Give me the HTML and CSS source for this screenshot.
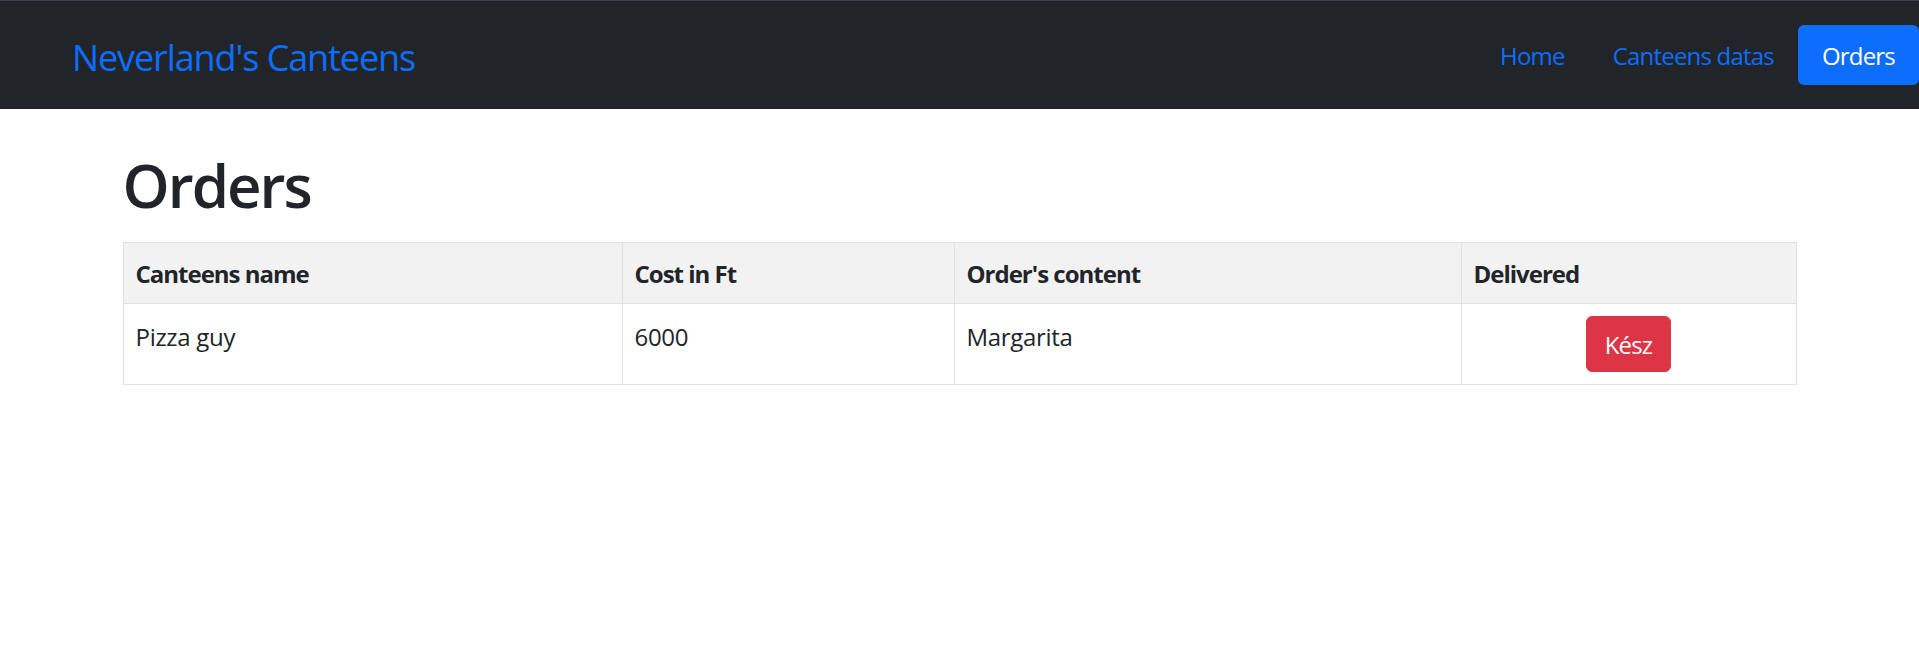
FILE: index.html
```html
<!DOCTYPE html>
<html lang="en">
<head>
<meta charset="utf-8">
<title>Orders</title>
<link rel="stylesheet" href="styles.css">
</head>
<body>
<nav class="navbar">
  <a class="brand" href="#">Neverland's Canteens</a>
  <ul class="nav">
    <li><a class="nav-link" href="#">Home</a></li>
    <li><a class="nav-link" href="#">Canteens datas</a></li>
    <li><a class="nav-link active" href="#">Orders</a></li>
  </ul>
</nav>
<main class="container">
  <h1 class="title">Orders</h1>
  <table class="orders">
    <thead>
      <tr>
        <th class="c1">Canteens name</th>
        <th class="c2">Cost in Ft</th>
        <th class="c3">Order's content</th>
        <th class="c4">Delivered</th>
      </tr>
    </thead>
    <tbody>
      <tr>
        <td>Pizza guy</td>
        <td>6000</td>
        <td>Margarita</td>
        <td class="center"><button class="btn-danger" type="button">Kész</button></td>
      </tr>
    </tbody>
  </table>
</main>
</body>
</html>
```

FILE: styles.css
```css
* { box-sizing: border-box; }

body {
  margin: 0;
  font-family: "Open Sans", "Noto Sans", sans-serif;
  font-size: 24px;
  line-height: 1.5;
  letter-spacing: -0.3px;
  color: #212529;
  background: #fff;
}

.navbar {
  height: 109px;
  background: #212529;
  border-top: 1px solid #3a414d;
  display: flex;
  align-items: center;
  justify-content: space-between;
  padding-left: 72px;
}

.brand {
  font-size: 36px;
  line-height: 1.5;
  letter-spacing: -1.1px;
  padding-top: 5px;
  color: #0d6efd;
  text-decoration: none;
}

.nav {
  list-style: none;
  margin: 0;
  padding: 0;
  display: flex;
  align-items: center;
}

.nav-link {
  display: block;
  padding: 13px 24px 11px;
  letter-spacing: -0.8px;
  color: #0d6efd;
  text-decoration: none;
  border-radius: 6px;
}

.nav-link.active {
  background: #0d6efd;
  color: #fff;
}

.container {
  max-width: 1710px;
  margin: 0 auto;
  padding: 0 18px;
}

.title {
  font-size: 60px;
  font-weight: 600;
  line-height: 1.2;
  letter-spacing: -2px;
  margin: 40px 0 21px;
}

.orders {
  width: 100%;
  border-collapse: collapse;
  border: 1px solid #dee2e6;
}

.orders th,
.orders td {
  border: 1px solid #dee2e6;
  padding: 15px 12px 9px;
  text-align: left;
  vertical-align: top;
}

.orders thead th {
  background: #f2f2f2;
  font-weight: 700;
  letter-spacing: -1px;
  padding: 13px 12px 11px;
}

.c1 { width: 499px; }
.c2 { width: 332px; }
.c3 { width: 507px; }

.orders td.center {
  text-align: center;
  padding: 12px;
}

.btn-danger {
  font-family: inherit;
  font-size: 24px;
  line-height: 1.5;
  letter-spacing: -0.8px;
  padding: 10px 18px 8px;
  border: 1px solid #dc3545;
  border-radius: 6px;
  background: #dc3545;
  color: #fff;
  cursor: pointer;
}
```
